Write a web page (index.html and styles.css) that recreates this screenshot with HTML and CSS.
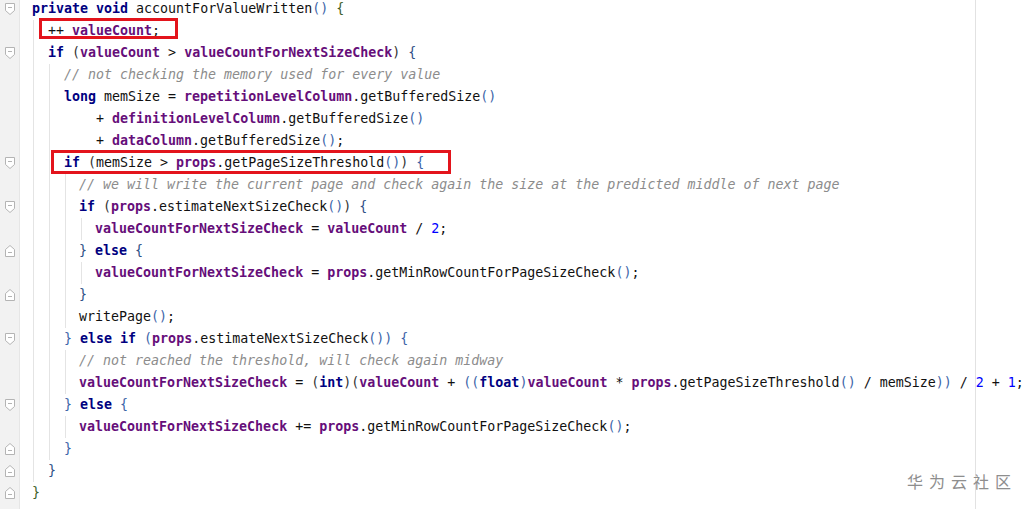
FILE: index.html
```html
<!DOCTYPE html>
<html lang="zh-CN">
<head>
    <meta charset="UTF-8">
    <title>accountForValueWritten</title>
    <link rel="stylesheet" href="styles.css">
</head>
<body>
    <div class="editor">
        <div class="gutter">
            <div class="row"><svg class="fold" viewBox="0 0 10 12"><path d="M0.5 0.5H9.5V7.5L5 11.5L0.5 7.5Z"/><path d="M3 4.5H7"/></svg></div>
            <div class="row"></div>
            <div class="row"><svg class="fold" viewBox="0 0 10 12"><path d="M0.5 0.5H9.5V7.5L5 11.5L0.5 7.5Z"/><path d="M3 4.5H7"/></svg></div>
            <div class="row"></div>
            <div class="row"></div>
            <div class="row"></div>
            <div class="row"></div>
            <div class="row"><svg class="fold" viewBox="0 0 10 12"><path d="M0.5 0.5H9.5V7.5L5 11.5L0.5 7.5Z"/><path d="M3 4.5H7"/></svg></div>
            <div class="row"></div>
            <div class="row"><svg class="fold" viewBox="0 0 10 12"><path d="M0.5 0.5H9.5V7.5L5 11.5L0.5 7.5Z"/><path d="M3 4.5H7"/></svg></div>
            <div class="row"></div>
            <div class="row"><svg class="fold" viewBox="0 0 10 12"><path d="M0.5 11.5H9.5V4.5L5 0.5L0.5 4.5Z"/><path d="M3 7.5H7"/></svg></div>
            <div class="row"></div>
            <div class="row"><svg class="fold" viewBox="0 0 10 12"><path d="M0.5 11.5H9.5V4.5L5 0.5L0.5 4.5Z"/><path d="M3 7.5H7"/></svg></div>
            <div class="row"></div>
            <div class="row"><svg class="fold" viewBox="0 0 10 12"><path d="M0.5 0.5H9.5V7.5L5 11.5L0.5 7.5Z"/><path d="M3 4.5H7"/></svg></div>
            <div class="row"></div>
            <div class="row"></div>
            <div class="row"><svg class="fold" viewBox="0 0 10 12"><path d="M0.5 0.5H9.5V7.5L5 11.5L0.5 7.5Z"/><path d="M3 4.5H7"/></svg></div>
            <div class="row"></div>
            <div class="row"><svg class="fold" viewBox="0 0 10 12"><path d="M0.5 11.5H9.5V4.5L5 0.5L0.5 4.5Z"/><path d="M3 7.5H7"/></svg></div>
            <div class="row"><svg class="fold" viewBox="0 0 10 12"><path d="M0.5 11.5H9.5V4.5L5 0.5L0.5 4.5Z"/><path d="M3 7.5H7"/></svg></div>
            <div class="row"><svg class="fold" viewBox="0 0 10 12"><path d="M0.5 11.5H9.5V4.5L5 0.5L0.5 4.5Z"/><path d="M3 7.5H7"/></svg></div>
        </div>

        <div class="code">
<div class="ln i0"><span class="k">private void</span> accountForValueWritten<span class="p1">()</span> <span class="b0">{</span></div>
<div class="ln i1"><span class="mark mark-a">++ <span class="f">valueCount</span>;</span></div>
<div class="ln i1"><span class="k">if</span> <span class="p0">(</span><span class="f">valueCount</span> &gt; <span class="f">valueCountForNextSizeCheck</span><span class="p0">)</span> <span class="b1">{</span></div>
<div class="ln i2"><span class="c">// not checking the memory used for every value</span></div>
<div class="ln i2"><span class="k">long</span> memSize = <span class="f">repetitionLevelColumn</span>.getBufferedSize<span class="p1">()</span></div>
<div class="ln i2">    + <span class="f">definitionLevelColumn</span>.getBufferedSize<span class="p1">()</span></div>
<div class="ln i2">    + <span class="f">dataColumn</span>.getBufferedSize<span class="p1">()</span>;</div>
<div class="ln i2"><span class="mark mark-b"><span class="k">if</span> <span class="p0">(</span>memSize &gt; <span class="f">props</span>.getPageSizeThreshold<span class="p1">()</span><span class="p0">)</span> <span class="b2">{</span></span></div>
<div class="ln i3"><span class="c">// we will write the current page and check again the size at the predicted middle of next page</span></div>
<div class="ln i3"><span class="k">if</span> <span class="p0">(</span><span class="f">props</span>.estimateNextSizeCheck<span class="p1">()</span><span class="p0">)</span> <span class="b1">{</span></div>
<div class="ln i4"><span class="f">valueCountForNextSizeCheck</span> = <span class="f">valueCount</span> / <span class="n">2</span>;</div>
<div class="ln i3"><span class="b1">}</span> <span class="k">else</span> <span class="b1">{</span></div>
<div class="ln i4"><span class="f">valueCountForNextSizeCheck</span> = <span class="f">props</span>.getMinRowCountForPageSizeCheck<span class="p1">()</span>;</div>
<div class="ln i3"><span class="b1">}</span></div>
<div class="ln i3">writePage<span class="p1">()</span>;</div>
<div class="ln i2"><span class="b2">}</span> <span class="k">else if</span> <span class="p1">(</span><span class="f">props</span>.estimateNextSizeCheck<span class="p1">())</span> <span class="b2">{</span></div>
<div class="ln i3"><span class="c">// not reached the threshold, will check again midway</span></div>
<div class="ln i3"><span class="f">valueCountForNextSizeCheck</span> = <span class="p0">(</span><span class="k">int</span><span class="p0">)(</span><span class="f">valueCount</span> + <span class="p1">((</span><span class="k">float</span><span class="p1">)</span><span class="f">valueCount</span> * <span class="f">props</span>.getPageSizeThreshold<span class="p1">()</span> / memSize<span class="p1">))</span> / <span class="n">2</span> + <span class="n">1</span>;</div>
<div class="ln i2"><span class="b2">}</span> <span class="k">else</span> <span class="b2">{</span></div>
<div class="ln i3"><span class="f">valueCountForNextSizeCheck</span> += <span class="f">props</span>.getMinRowCountForPageSizeCheck<span class="p1">()</span>;</div>
<div class="ln i2"><span class="b2">}</span></div>
<div class="ln i1"><span class="b1">}</span></div>
<div class="ln i0"><span class="b0">}</span></div>
        </div>
    </div>

    <div class="watermark">华为云社区</div>
</body>
</html>
```

FILE: styles.css
```css
html, body {
    margin: 0;
    height: 100%;
    overflow: hidden;
}
body {
    background: #fff;
    position: relative;
}
.editor {
    display: flex;
    min-height: 100vh;
    /* right margin guide */
    background: linear-gradient(to right, transparent 975px, #e2e2e2 975px, #e2e2e2 976px, transparent 976px);
}
.gutter {
    width: 19px;
    flex: none;
    background: #f2f2f2;
    border-right: 1px solid #e6e6e6;
    margin-top: -2px;
}
.row {
    height: 22px;
    display: flex;
    align-items: center;
    padding-left: 5px;
}
.fold {
    width: 10px;
    height: 12px;
    fill: #fff;
    stroke: #b4b4b4;
    stroke-width: 1;
}
.code {
    margin-top: -2px;
    padding-left: 12px;
    font-family: "DejaVu Sans Mono", "Liberation Mono", monospace;
    font-size: 13.3px;
    line-height: 22px;
    color: #111;
}
.ln {
    height: 22px;
    white-space: pre;
    background-image: repeating-linear-gradient(to right, #e4e4e4 0, #e4e4e4 1px, transparent 1px, transparent 16px);
    background-repeat: no-repeat;
    background-position: 1px 0;
    background-size: 0 100%;
}
.i1 { padding-left: 16px; background-size: 16px 100%; }
.i2 { padding-left: 32px; background-size: 32px 100%; }
.i3 { padding-left: 47px; background-size: 47px 100%; }
.i4 { padding-left: 63px; background-size: 63px 100%; }

.k { color: #000080; font-weight: bold; }
.f { color: #660e7a; font-weight: bold; }
.c { color: #8c8c8c; font-style: italic; }
.n { color: #0000ff; }
.p0 { color: #333; }
.p1 { color: #3d64a8; }
.b0 { color: #3f5f2a; }
.b1 { color: #2f4f86; }
.b2 { color: #3d64a8; }

.mark {
    position: relative;
    display: inline-block;
    height: 22px;
    vertical-align: top;
}
.mark::after {
    content: "";
    position: absolute;
    border: 3px solid #e3141c;
}
.mark-a::after {
    left: -9px;
    right: -18px;
    top: -2px;
    bottom: 3px;
}
.mark-b::after {
    left: -13px;
    right: -27px;
    top: -2px;
    bottom: 0;
}

.watermark {
    position: absolute;
    right: 12px;
    bottom: 16px;
    font-family: "Noto Sans CJK SC", sans-serif;
    font-size: 16px;
    letter-spacing: 6px;
    color: #8e8e8e;
}
```
